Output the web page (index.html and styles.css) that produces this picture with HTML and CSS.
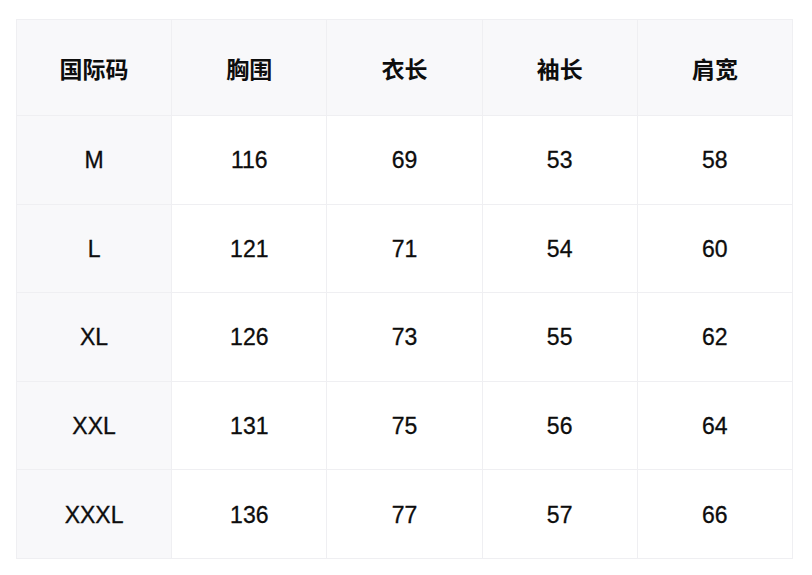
FILE: index.html
```html
<!DOCTYPE html>
<html lang="zh">
<head>
<meta charset="utf-8">
<link rel="stylesheet" href="styles.css">
</head>
<body>
<table class="size-table">
  <thead>
    <tr><th>国际码</th><th>胸围</th><th>衣长</th><th>袖长</th><th>肩宽</th></tr>
  </thead>
  <tbody>
    <tr><td>M</td><td>116</td><td>69</td><td>53</td><td>58</td></tr>
    <tr><td>L</td><td>121</td><td>71</td><td>54</td><td>60</td></tr>
    <tr><td>XL</td><td>126</td><td>73</td><td>55</td><td>62</td></tr>
    <tr><td>XXL</td><td>131</td><td>75</td><td>56</td><td>64</td></tr>
    <tr><td>XXXL</td><td>136</td><td>77</td><td>57</td><td>66</td></tr>
  </tbody>
</table>
</body>
</html>
```
FILE: styles.css
```css
html, body {
  margin: 0;
  background: #ffffff;
}
body {
  padding: 19px 19px 0 16px;
  font-family: "Liberation Sans", "Noto Sans CJK SC", sans-serif;
  color: #0d0d0d;
}
.size-table {
  width: 777px;
  border-collapse: collapse;
  table-layout: fixed;
}
.size-table th,
.size-table td {
  border: 1px solid #efeff2;
  text-align: center;
  vertical-align: middle;
  padding: 0;
}
.size-table th {
  height: 95px;
  background: #f8f8fa;
  font-weight: 700;
  font-size: 23px;
}
.size-table td {
  height: 85.6px;
  padding-top: 2px;
  font-size: 23px;
  -webkit-text-stroke: 0.3px #0d0d0d;
}
.size-table td:first-child {
  background: #f8f8fa;
}
```
